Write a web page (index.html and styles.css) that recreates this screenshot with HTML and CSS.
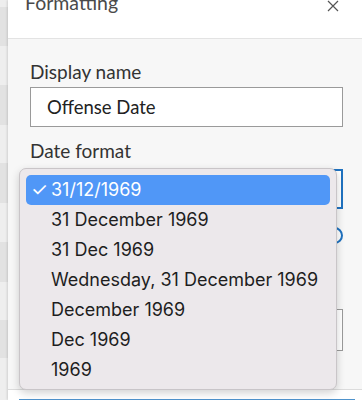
FILE: index.html
```html
<!DOCTYPE html>
<html>
<head>
<meta charset="utf-8">
<link rel="stylesheet" href="styles.css">
</head>
<body>
<div class="page">
  <div class="stripes">
    <div class="s light h7"></div>
    <div class="s dark h39"></div>
    <div class="s light h39"></div>
    <div class="s dark h40"></div>
    <div class="s light h38"></div>
    <div class="s dark h40"></div>
    <div class="s light h39"></div>
    <div class="s dark h40"></div>
    <div class="s light h38"></div>
    <div class="s dark h38"></div>
    <div class="s light h42"></div>
  </div>
  <div class="panel">
    <div class="header">
      <div class="title">Formatting</div>
      <div class="close">
        <svg width="12" height="12" viewBox="0 0 12 12"><path d="M1 1 L11 11 M11 1 L1 11" stroke="#555" stroke-width="1.2" fill="none"/></svg>
      </div>
    </div>
    <div class="body">
      <div class="label first">Display name</div>
      <div class="input">Offense Date</div>
      <div class="label">Date format</div>
      <div class="select"></div>
      <div class="row-toggle"><span class="ring"></span></div>
      <div class="input second"></div>
    </div>
    <div class="footer">
      <div class="btn"></div>
    </div>
  </div>
  <div class="menu">
    <div class="item selected"><span class="check">✓</span>31/12/1969</div>
    <div class="item">31 December 1969</div>
    <div class="item">31 Dec 1969</div>
    <div class="item">Wednesday, 31 December 1969</div>
    <div class="item">December 1969</div>
    <div class="item">Dec 1969</div>
    <div class="item">1969</div>
  </div>
</div>
</body>
</html>
```
FILE: styles.css
```css
html, body {
  margin: 0;
  padding: 0;
  overflow: hidden;
}
body {
  width: 362px;
  height: 400px;
  background: #f4f4f4;
  font-family: Lato, "Open Sans", sans-serif;
}
.page {
  position: relative;
  display: flex;
  width: 362px;
  height: 400px;
}
.stripes {
  width: 8px;
  flex: none;
  display: flex;
  flex-direction: column;
}
.s { flex: none; }
.light { background: #eeeeee; }
.dark { background: #e2e2e2; }
.h7 { height: 7px; }
.h38 { height: 38px; }
.h39 { height: 39px; }
.h40 { height: 40px; }
.h42 { height: 42px; }
.panel {
  flex: 1;
  display: flex;
  flex-direction: column;
  background: #f7f7f7;
  box-shadow: -1px 0 2px rgba(0,0,0,0.12);
}
.header {
  height: 38px;
  flex: none;
  background: #ffffff;
  border-bottom: 1px solid #e3e3e3;
  display: flex;
  justify-content: space-between;
  align-items: flex-start;
  padding: 0 23px 0 17px;
}
.title {
  margin-top: -9px;
  font-size: 19.5px;
  line-height: 24px;
  color: #4a4a4a;
}
.close {
  margin-top: 0px;
  line-height: 0;
}
.body {
  flex: 1;
  padding: 0 19px 0 22px;
  display: flex;
  flex-direction: column;
}
.label {
  font-size: 19px;
  line-height: 22px;
  color: #333;
  margin-top: 13px;
  margin-bottom: 7px;
}
.label.first {
  margin-top: 22px;
  margin-bottom: 4px;
}
.input {
  height: 40px;
  box-sizing: border-box;
  border: 1px solid #9a9a9a;
  background: #fff;
  font-size: 18.5px;
  line-height: 38px;
  padding-left: 16px;
  color: #222;
}
.select {
  height: 40px;
  box-sizing: border-box;
  border: 2px solid #1f72c0;
  background: #fff;
}
.row-toggle {
  height: 18px;
  margin-top: 18px;
  display: flex;
  justify-content: flex-end;
}
.ring {
  width: 17px;
  height: 17px;
  box-sizing: border-box;
  border: 2.5px solid #1f72c0;
  border-radius: 50%;
  background: #fff;
}
.input.second {
  margin-top: 64px;
  height: 42px;
}
.footer {
  height: 11px;
  flex: none;
  background: #fff;
  border-top: 1px solid #dcdcdc;
  padding: 9px 7px 0 11px;
  box-sizing: border-box;
}
.btn {
  height: 10px;
  border-top: 2px solid #4f93cc;
}
.menu {
  position: absolute;
  left: 19px;
  top: 168px;
  width: 318px;
  height: 222px;
  box-sizing: border-box;
  background: #ece8eb;
  border: 1px solid #c9c5c8;
  border-radius: 7px;
  box-shadow: 0 3px 8px rgba(0,0,0,0.18);
  padding: 6px 6px 0 6px;
  font-family: Inter, Roboto, sans-serif;
}
.item {
  height: 30px;
  line-height: 30px;
  font-size: 18px;
  color: #1e1e1e;
  padding-left: 25px;
  border-radius: 5px;
  position: relative;
  white-space: nowrap;
}
.item.selected {
  background: #5097f7;
  color: #fff;
}
.check {
  position: absolute;
  left: 5px;
  top: 0;
  font-size: 19px;
}
```
